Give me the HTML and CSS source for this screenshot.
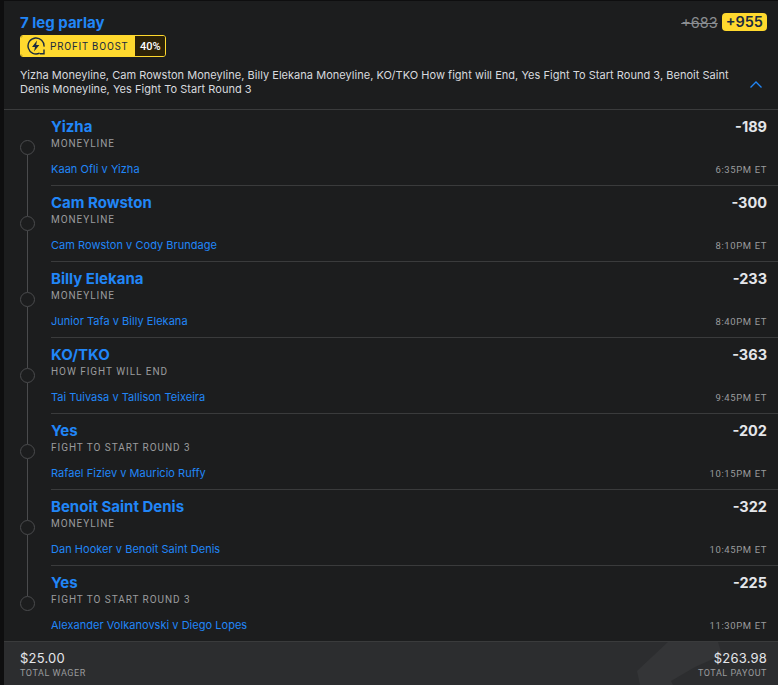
FILE: index.html
```html
<!DOCTYPE html>
<html lang="en">
<head>
    <meta charset="UTF-8">
    <meta name="viewport" content="width=device-width, initial-scale=1.0">
    <title>7 leg parlay</title>
    <link rel="stylesheet" href="styles.css">
</head>
<body>
    <div class="card">
        <div class="head">
            <div class="head-top">
                <div>
                    <h1>7 leg parlay</h1>
                    <div class="boost">
                        <span class="boost-label">
                            <svg width="18" height="18" viewBox="0 0 18 18" fill="none">
                                <path d="M12.6 16.1A8 8 0 1 1 17 9.6" stroke="#1b2b3f" stroke-width="1.4"/>
                                <path d="M10 3.6 5 10h3l-1 4.6L12.4 8H9.2z" fill="#1b2b3f"/>
                                <path d="M17 12.5v4.300h-4.300" stroke="#1b2b3f" stroke-width="1.4"/>
                            </svg>
                            PROFIT BOOST
                        </span>
                        <span class="boost-pct">40%</span>
                    </div>
                </div>
                <div class="odds">
                    <s>+683</s>
                    <span class="odds-new">+955</span>
                </div>
            </div>
            <div class="summary">
                <p>Yizha Moneyline, Cam Rowston Moneyline, Billy Elekana Moneyline, KO/TKO How fight will End, Yes Fight To Start Round 3, Benoit Saint Denis Moneyline, Yes Fight To Start Round 3</p>
                <svg class="chevron" width="12" height="7" viewBox="0 0 12 7" fill="none">
                    <path d="M.5 6.500l5.500-5.500 5.500 5.500" stroke="#2186f7" stroke-width="1.300"/>
                </svg>
            </div>
        </div>

        <div class="legs">
            <div class="leg">
                <div class="marker"><i></i></div>
                <div class="leg-body">
                    <div class="row"><span class="pick">Yizha</span><span class="price">-189</span></div>
                    <div class="market">MONEYLINE</div>
                    <div class="row row-bottom"><span class="fight">Kaan Ofli v Yizha</span><span class="time">6:35PM ET</span></div>
                </div>
            </div>
            <div class="leg">
                <div class="marker"><i></i></div>
                <div class="leg-body">
                    <div class="row"><span class="pick">Cam Rowston</span><span class="price">-300</span></div>
                    <div class="market">MONEYLINE</div>
                    <div class="row row-bottom"><span class="fight">Cam Rowston v Cody Brundage</span><span class="time">8:10PM ET</span></div>
                </div>
            </div>
            <div class="leg">
                <div class="marker"><i></i></div>
                <div class="leg-body">
                    <div class="row"><span class="pick">Billy Elekana</span><span class="price">-233</span></div>
                    <div class="market">MONEYLINE</div>
                    <div class="row row-bottom"><span class="fight">Junior Tafa v Billy Elekana</span><span class="time">8:40PM ET</span></div>
                </div>
            </div>
            <div class="leg">
                <div class="marker"><i></i></div>
                <div class="leg-body">
                    <div class="row"><span class="pick">KO/TKO</span><span class="price">-363</span></div>
                    <div class="market">HOW FIGHT WILL END</div>
                    <div class="row row-bottom"><span class="fight">Tai Tuivasa v Tallison Teixeira</span><span class="time">9:45PM ET</span></div>
                </div>
            </div>
            <div class="leg">
                <div class="marker"><i></i></div>
                <div class="leg-body">
                    <div class="row"><span class="pick">Yes</span><span class="price">-202</span></div>
                    <div class="market">FIGHT TO START ROUND 3</div>
                    <div class="row row-bottom"><span class="fight">Rafael Fiziev v Mauricio Ruffy</span><span class="time">10:15PM ET</span></div>
                </div>
            </div>
            <div class="leg">
                <div class="marker"><i></i></div>
                <div class="leg-body">
                    <div class="row"><span class="pick">Benoit Saint Denis</span><span class="price">-322</span></div>
                    <div class="market">MONEYLINE</div>
                    <div class="row row-bottom"><span class="fight">Dan Hooker v Benoit Saint Denis</span><span class="time">10:45PM ET</span></div>
                </div>
            </div>
            <div class="leg leg-last">
                <div class="marker"><i></i></div>
                <div class="leg-body">
                    <div class="row"><span class="pick">Yes</span><span class="price">-225</span></div>
                    <div class="market">FIGHT TO START ROUND 3</div>
                    <div class="row row-bottom"><span class="fight">Alexander Volkanovski v Diego Lopes</span><span class="time">11:30PM ET</span></div>
                </div>
            </div>
        </div>

        <div class="foot">
            <svg class="foot-mark" width="158" height="43" viewBox="0 0 158 43" fill="none">
                <path d="M17 29 48 0h50l4 13-27 12-24 14 2 4H20z" fill="#343537"/>
            </svg>
            <div>
                <div class="amount">$25.00</div>
                <div class="foot-label">TOTAL WAGER</div>
            </div>
            <div class="foot-right">
                <div class="amount">$263.98</div>
                <div class="foot-label">TOTAL PAYOUT</div>
            </div>
        </div>
    </div>
</body>
</html>
```

FILE: styles.css
```css
body {
    margin: 0;
    background-color: #0e0e0f;
    font-family: Inter, "Liberation Sans", sans-serif;
}
.card {
    margin-left: 4px;
    height: 685px;
    display: flex;
    flex-direction: column;
    background-color: #1c1d1e;
}
.head {
    flex-shrink: 0;
    height: 110px;
    box-sizing: border-box;
    padding: 12px 11px 0 16px;
    border-top: 1px solid #0e0e0f;
    border-bottom: 1px solid #3a3b3c;
}
.head-top {
    display: flex;
    justify-content: space-between;
}
h1 {
    margin: 0;
    font-size: 15px;
    line-height: 19px;
    font-weight: 700;
    color: #2186f7;
}
.boost {
    display: inline-flex;
    height: 22px;
    margin-top: 3px;
    border: 1px solid #ffd92e;
    border-radius: 3px;
    overflow: hidden;
    box-sizing: border-box;
    font-family: Roboto, sans-serif;
    font-size: 10px;
}
.boost-label {
    display: flex;
    align-items: center;
    gap: 5px;
    padding: 0 7px 0 6px;
    background-color: #ffd92e;
    color: #1b2b3f;
    letter-spacing: 0.9px;
}
.boost-pct {
    display: flex;
    align-items: center;
    justify-content: center;
    width: 30px;
    background-color: #2c2208;
    color: #fff;
    font-size: 11px;
    font-weight: 500;
}
.odds {
    display: flex;
    align-items: center;
    gap: 4px;
    height: 18px;
    font-size: 14.5px;
}
.odds s {
    color: #8a8d91;
}
.odds-new {
    padding: 0 4px;
    line-height: 18px;
    background-color: #ffd92e;
    border-radius: 4px;
    color: #1b2b3f;
    font-weight: 600;
}
.summary {
    display: flex;
    justify-content: space-between;
    align-items: center;
    margin-top: 9px;
}
.summary p {
    margin: 0;
    width: 716px;
    font-size: 11px;
    line-height: 14px;
    letter-spacing: 0.03px;
    color: #d8dade;
}
.chevron {
    margin-top: 4px;
    margin-right: 5px;
}
.legs {
    flex: 1;
}
.leg {
    display: flex;
    height: 76px;
}
.leg-last {
    height: 75px;
}
.marker {
    position: relative;
    width: 47px;
    flex-shrink: 0;
}
.marker i {
    position: absolute;
    left: 16px;
    top: 30px;
    width: 13px;
    height: 13px;
    border: 1px solid #4a4b4d;
    border-radius: 50%;
}
.marker::after {
    content: "";
    position: absolute;
    left: 23px;
    top: 45px;
    width: 1px;
    height: 61px;
    background-color: #4a4b4d;
}
.leg-last .marker::after {
    display: none;
}
.leg-body {
    flex: 1;
    box-sizing: border-box;
    padding: 7px 11px 0 0;
    border-bottom: 1px solid #3a3b3c;
}
.leg-last .leg-body {
    border-bottom: none;
}
.row {
    display: flex;
    justify-content: space-between;
    align-items: flex-end;
}
.pick {
    font-size: 15px;
    line-height: 19px;
    font-weight: 700;
    color: #2186f7;
}
.price {
    font-size: 14.5px;
    line-height: 19px;
    font-weight: 700;
    color: #e4e6ea;
}
.market {
    margin-top: 1px;
    font-family: Roboto, sans-serif;
    font-size: 10px;
    line-height: 13px;
    letter-spacing: 0.95px;
    color: #9a9b9d;
}
.row-bottom {
    margin-top: 12px;
    align-items: flex-start;
}
.fight {
    font-size: 11px;
    line-height: 14px;
    letter-spacing: 0.03px;
    color: #2186f7;
}
.time {
    font-family: Roboto, sans-serif;
    font-size: 9.5px;
    line-height: 16px;
    letter-spacing: 0.6px;
    color: #9a9b9d;
}
.foot {
    position: relative;
    flex-shrink: 0;
    height: 44px;
    box-sizing: border-box;
    display: flex;
    justify-content: space-between;
    padding: 8px 11px 0 16px;
    background-color: #2c2d2f;
    border-top: 1px solid #3a3b3c;
    overflow: hidden;
}
.foot > div {
    position: relative;
}
.foot-mark {
    position: absolute;
    right: 0;
    top: 0;
}
.foot-right {
    text-align: right;
}
.amount {
    font-size: 13px;
    line-height: 16px;
    letter-spacing: 0.2px;
    color: #e4e6ea;
}
.foot-label {
    margin-top: 1px;
    font-family: Roboto, sans-serif;
    font-size: 9px;
    line-height: 12px;
    letter-spacing: 0.55px;
    color: #9a9b9d;
}
```
